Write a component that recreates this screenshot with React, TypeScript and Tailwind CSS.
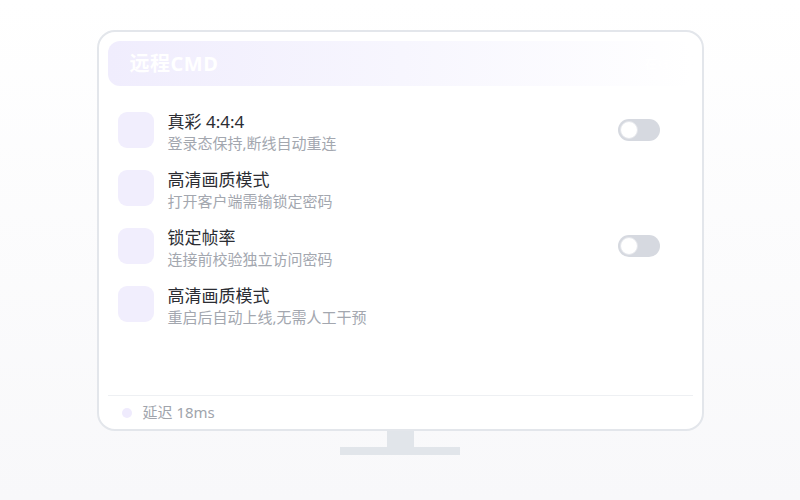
import React from "react";

const rows = [
  { title: "真彩 4:4:4", sub: "登录态保持,断线自动重连", toggle: true },
  { title: "高清画质模式", sub: "打开客户端需输锁定密码", toggle: false },
  { title: "锁定帧率", sub: "连接前校验独立访问密码", toggle: true },
  { title: "高清画质模式", sub: "重启后自动上线,无需人工干预", toggle: false },
];

function Toggle() {
  return (
    <div className="w-[42px] h-[22px] rounded-full bg-[#d6d9e0] p-[2px] flex items-center">
      <div className="w-[18px] h-[18px] rounded-full bg-white border border-[#e4e6eb]" />
    </div>
  );
}

export default function App() {
  return (
    <div
      className="w-[800px] h-[500px] flex flex-col items-center pt-[30px] bg-gradient-to-b from-white to-[#f8f8fa]"
      style={{ fontFamily: '"Noto Sans", "Noto Sans CJK SC", sans-serif' }}
    >
      <div className="w-[607px] h-[401px] border-2 border-[#e3e6eb] rounded-[18px] bg-white pt-[9px] px-[9px] flex flex-col">
        <div className="h-[45px] shrink-0 rounded-[12px] bg-gradient-to-r from-[#f0edfd] via-[#f7f6fe] to-white flex items-center justify-between pl-[22px] pr-[22px]">
          <span className="text-white text-[20px] font-bold tracking-[0.5px] leading-none">远程CMD</span>
          <span className="text-white text-[13px] font-semibold">在线</span>
        </div>
        <div className="flex flex-col gap-[16px] mt-[25px] pl-[10px] pr-[33px]">
          {rows.map((r, i) => (
            <div key={i} className="h-[42px] flex items-start">
              <div className="w-[36px] h-[36px] mt-[1px] rounded-[9px] bg-[#f1eefd] shrink-0" />
              <div className="ml-[14px] flex flex-col flex-1">
                <span className="text-[17px] leading-[22px] text-[#2b2d33]">{r.title}</span>
                <span className="text-[15px] leading-[20px] text-[#a3a7af]">{r.sub}</span>
              </div>
              {r.toggle && (
                <div className="mt-[8px]">
                  <Toggle />
                </div>
              )}
            </div>
          ))}
        </div>
        <div className="flex-1" />
        <div className="h-px bg-[#eef0f3]" />
        <div className="h-[33px] flex items-center pl-[14px]">
          <div className="w-[10px] h-[10px] rounded-full bg-[#efebfd]" />
          <span className="ml-[11px] text-[15px] text-[#a0a4ac]">延迟 18ms</span>
        </div>
      </div>
      <div className="w-[27px] h-[16px] bg-[#e1e5ea]" />
      <div className="w-[120px] h-[8px] bg-[#e1e5ea]" />
    </div>
  );
}
